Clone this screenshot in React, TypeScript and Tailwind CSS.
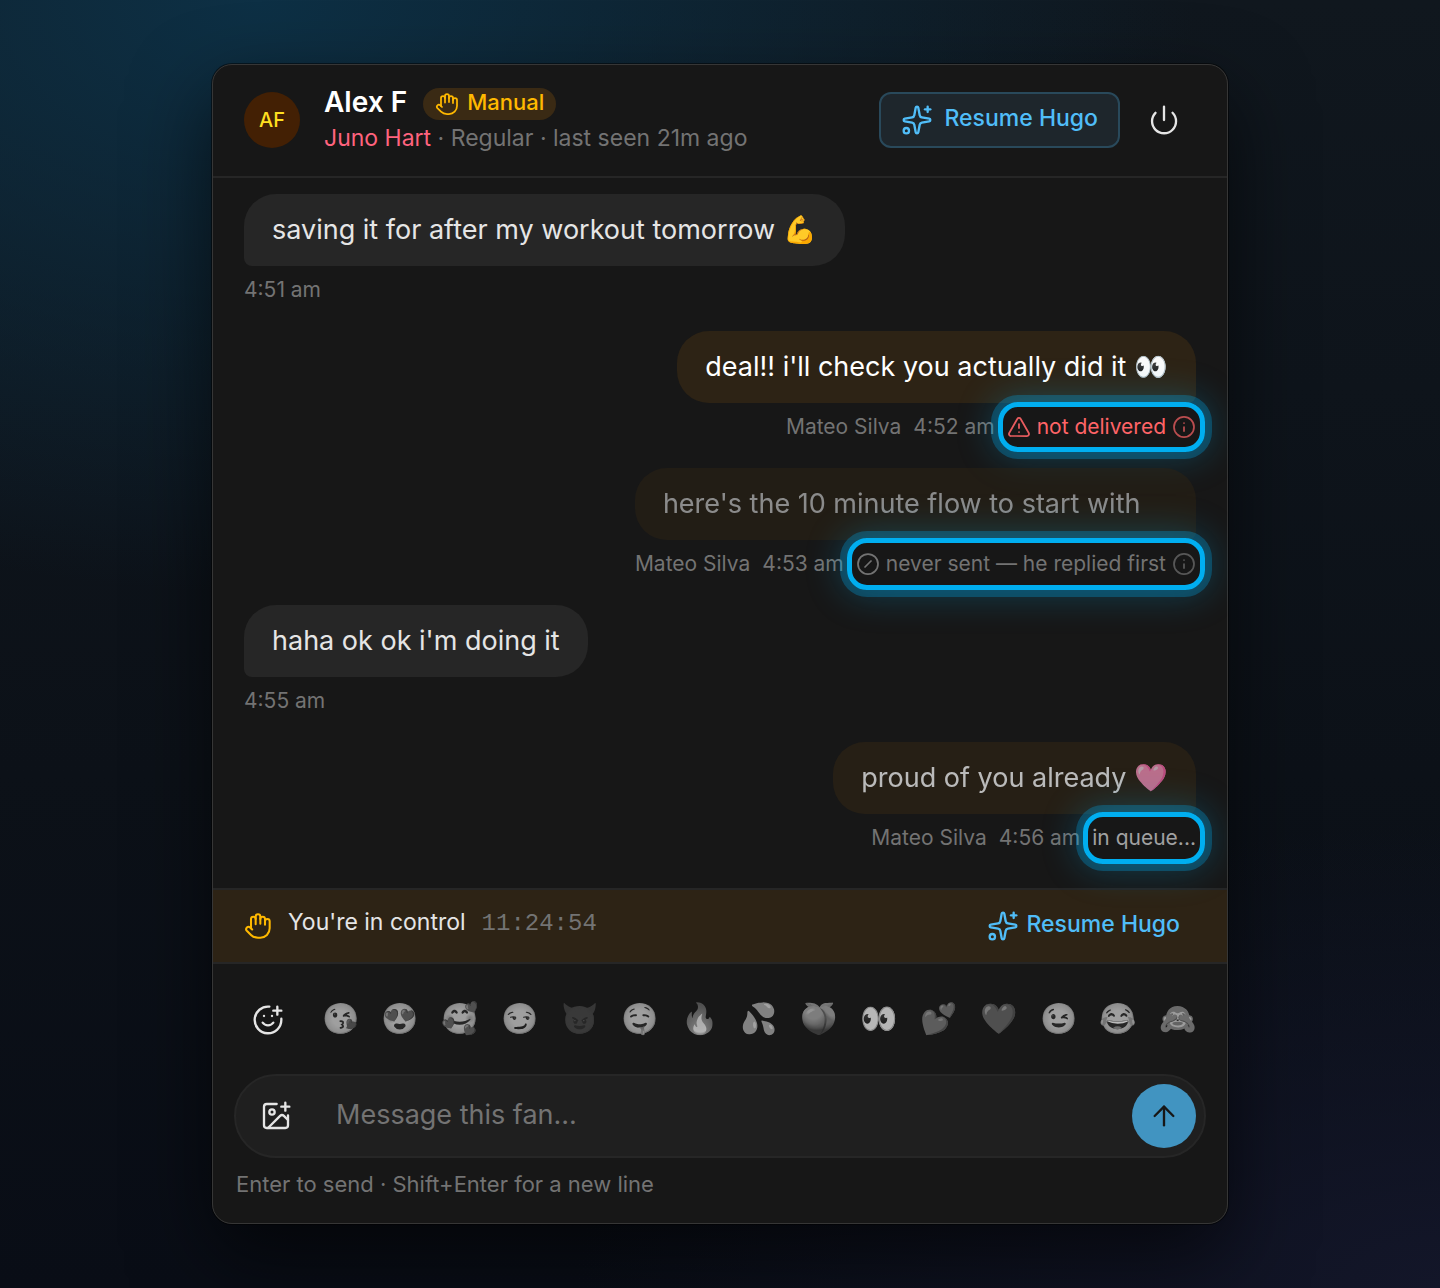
import { useState } from "react"
import type { ReactNode } from "react"
import { ArrowUp, CircleSlash, Hand, ImagePlus, Info, Power, SmilePlus, Sparkles, TriangleAlert } from "lucide-react"
import clsx from "clsx"

type Status = "failed" | "skipped" | "queued"

interface Message {
  id: number
  text: string
  time: string
  author?: string
  status?: Status
}

const messages: Message[] = [
  { id: 1, text: "saving it for after my workout tomorrow 💪", time: "4:51 am" },
  { id: 2, text: "deal!! i'll check you actually did it 👀", time: "4:52 am", author: "Mateo Silva", status: "failed" },
  { id: 3, text: "here's the 10 minute flow to start with", time: "4:53 am", author: "Mateo Silva", status: "skipped" },
  { id: 4, text: "haha ok ok i'm doing it", time: "4:55 am" },
  { id: 5, text: "proud of you already 🩷", time: "4:56 am", author: "Mateo Silva", status: "queued" },
]

const quickEmojis = ["😘", "😍", "🥰", "😏", "😈", "🤤", "🔥", "💦", "🍑", "👀", "💕", "❤️", "😉", "😂", "🙈"]

function Highlight({ className, children }: { className?: string; children: ReactNode }) {
  return (
    <span
      className={clsx(
        "relative -m-[9px] flex items-center gap-1.5 rounded-[20px] border-[5px] border-[#00aef0] px-1",
        "shadow-[0_0_0_7px_rgba(0,174,240,0.28),0_0_36px_6px_rgba(0,174,240,0.26)]",
        className
      )}
    >
      {children}
    </span>
  )
}

function StatusLabel({ status }: { status: Status }) {
  if (status === "failed") {
    return (
      <Highlight className="h-[50px] text-[#ff6467]">
        <TriangleAlert size={24} strokeWidth={1.75} className="opacity-90" />
        <span>not delivered</span>
        <Info size={24} strokeWidth={1.75} className="opacity-70" />
      </Highlight>
    )
  }

  if (status === "skipped") {
    return (
      <Highlight className="h-[52px] text-[#737373]">
        <CircleSlash size={24} strokeWidth={1.75} />
        <span>never sent — he replied first</span>
        <Info size={24} strokeWidth={1.75} className="opacity-70" />
      </Highlight>
    )
  }

  return <Highlight className="h-[52px] text-[#a1a1a1]">in queue...</Highlight>
}

function MessageRow({ message }: { message: Message }) {
  const outgoing = Boolean(message.author)

  return (
    <li className={clsx("flex flex-col gap-2", outgoing ? "self-end" : "self-start")}>
      <p
        className={clsx(
          "rounded-[32px] px-7 py-4 text-[27px] leading-10",
          outgoing ? "rounded-br-lg bg-[#2d2315] text-white" : "rounded-bl-lg bg-[#262626] text-neutral-200",
          message.status === "skipped" && "opacity-50",
          message.status === "queued" && "opacity-70"
        )}
      >
        {message.text}
      </p>
      <div className={clsx("flex h-8 items-center gap-3 text-[21px] text-[#737373]", outgoing && "justify-end")}>
        {message.author && <span>{message.author}</span>}
        <time>{message.time}</time>
        {message.status && <StatusLabel status={message.status} />}
      </div>
    </li>
  )
}

function ChatHeader() {
  return (
    <header className="flex items-center gap-6 border-b-2 border-[#262626] px-8 py-5">
      <div className="flex size-14 items-center justify-center rounded-full bg-[#432004] text-xl font-medium text-[#ffdf20]">
        AF
      </div>
      <div className="min-w-0 flex-1">
        <div className="flex items-end gap-4">
          <h1 className="text-[28px] leading-9 font-semibold text-white">Alex F</h1>
          <span className="flex h-8 items-center gap-2 rounded-full bg-[#3a2a14] px-3 text-[22px] leading-8 font-medium text-[#ffb900]">
            <Hand size={24} strokeWidth={1.75} />
            <span className="pb-1">Manual</span>
          </span>
        </div>
        <p className="truncate text-[23px] leading-9 text-[#737373]">
          <a href="#juno" className="text-[#ff637e]">Juno Hart</a> · Regular · last seen 21m ago
        </p>
      </div>
      <div className="flex items-center gap-3">
        <button
          type="button"
          className="flex h-14 items-center gap-3 rounded-xl border-2 border-[#29495b] bg-[#1e262c] px-5 text-[23px] font-medium text-[#50bdf8]"
        >
          <Sparkles size={32} strokeWidth={1.75} />
          <span className="pb-1">Resume Hugo</span>
        </button>
        <button type="button" aria-label="Turn off" className="flex size-16 items-center justify-center text-neutral-200">
          <Power size={32} strokeWidth={1.75} />
        </button>
      </div>
    </header>
  )
}

function ControlBar() {
  return (
    <div className="flex h-[76px] items-center gap-4 border-y-2 border-[#262626] bg-[#2d2315] px-8">
      <Hand size={28} strokeWidth={1.75} className="text-[#ffb900]" />
      <div className="flex items-baseline gap-4 pb-2">
        <span className="text-[23px] text-neutral-200">You're in control</span>
        <time className="font-['Liberation_Mono',monospace] text-2xl text-[#737373]">11:24:54</time>
      </div>
      <button type="button" className="ml-auto flex items-center gap-2 px-4 text-[23px] font-medium text-[#50bdf8]">
        <Sparkles size={32} strokeWidth={1.75} />
        <span className="pb-1">Resume Hugo</span>
      </button>
    </div>
  )
}

function Composer() {
  const [text, setText] = useState("")

  return (
    <form className="px-[22px] pt-7 pb-6" onSubmit={e => e.preventDefault()}>
      <div className="flex items-center gap-5 pr-1 pl-1.5">
        <button type="button" aria-label="Add emoji" className="flex size-14 items-center justify-center text-neutral-200">
          <SmilePlus size={32} strokeWidth={1.75} />
        </button>
        <div className="flex flex-1 justify-between">
          {quickEmojis.map(emoji => (
            <button
              key={emoji}
              type="button"
              onClick={() => setText(text + emoji)}
              className="flex size-12 items-center justify-center pb-1 text-[30px] leading-none opacity-70 grayscale"
            >
              {emoji}
            </button>
          ))}
        </div>
      </div>
      <div className="mt-[26px] flex h-[84px] items-center rounded-full border-2 border-[#262626] bg-[#1f1f1f] px-2">
        <button type="button" aria-label="Add image" className="flex size-16 items-center justify-center text-neutral-200">
          <ImagePlus size={32} strokeWidth={1.75} />
        </button>
        <input
          type="text"
          aria-label="Message"
          value={text}
          onChange={e => setText(e.target.value)}
          placeholder="Message this fan..."
          className="min-w-0 flex-1 bg-transparent px-7 pb-0.5 text-[27px] text-white outline-none placeholder:text-[#737373]"
        />
        <button
          type="submit"
          aria-label="Send"
          className="flex size-16 items-center justify-center rounded-full bg-[#4194c1] text-[#171717]"
        >
          <ArrowUp size={32} strokeWidth={1.75} />
        </button>
      </div>
      <p className="mt-2.5 px-0.5 text-[22px] leading-8 text-[#737373]">Enter to send · Shift+Enter for a new line</p>
    </form>
  )
}

export default function App() {
  return (
    <main className="flex min-h-screen items-center justify-center bg-[radial-gradient(ellipse_65%_46%_at_18%_0%,#0d3045_0%,transparent_100%),radial-gradient(ellipse_60%_36%_at_100%_100%,#131629_0%,transparent_100%),linear-gradient(180deg,#10171e_0%,#0c1118_60%,#090d16_100%)] px-6 py-16 font-['Inter',sans-serif]">
      <section className="w-full max-w-[1016px] overflow-hidden rounded-[20px] bg-[#171717] shadow-[0_0_0_1px_rgba(0,0,0,0.5),0_32px_80px_rgba(0,0,0,0.6)] outline-1 -outline-offset-1 outline-[#363636]">
        <ChatHeader />
        <ul className="flex flex-col gap-[25px] px-8 pt-4 pb-[34px]">
          {messages.map(message => (
            <MessageRow key={message.id} message={message} />
          ))}
        </ul>
        <ControlBar />
        <Composer />
      </section>
    </main>
  )
}
